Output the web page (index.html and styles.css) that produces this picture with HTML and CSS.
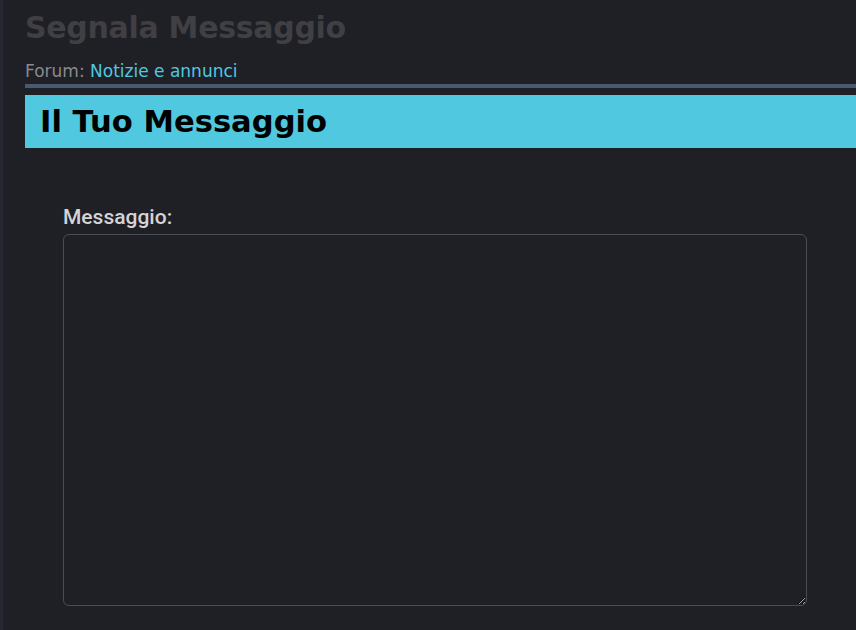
FILE: index.html
```html
<!DOCTYPE html>
<html lang="it">
<head>
  <meta charset="UTF-8" />
  <meta name="viewport" content="width=device-width, initial-scale=1.0"/>
  <title>Segnala Messaggio</title>
  <link rel="stylesheet" href="styles.css">
</head>
<body>
  <div class="page">
    <h1 class="page-title">Segnala Messaggio</h1>
    <div class="breadcrumb">Forum: <a href="#">Notizie e annunci</a></div>

    <div class="section-head">
      <h2>Il Tuo Messaggio</h2>
    </div>

    <form class="report-form">
      <label for="msg">Messaggio:</label>
      <textarea id="msg"></textarea>
    </form>
  </div>
</body>
</html>
```

FILE: styles.css
```css
* {
  margin: 0;
  padding: 0;
  box-sizing: border-box;
}

body {
  background-color: #1f2026;
  font-family: "DejaVu Sans", Verdana, sans-serif;
  overflow: hidden;
}

.page {
  border-left: 3px solid #262731;
  min-height: 100vh;
  padding: 8px 0 0 22px;
}

.page-title {
  font-size: 30px;
  font-weight: 700;
  color: #3f3f44;
  line-height: 40px;
  letter-spacing: -0.3px;
}

.breadcrumb {
  margin-top: 13px;
  font-size: 17px;
  color: #8a8a8e;
  line-height: 21px;
  padding-bottom: 2px;
  border-bottom: 4px solid #4a5a6e;
}

.breadcrumb a {
  color: #4fc8e0;
  text-decoration: none;
}

.section-head {
  margin-top: 7px;
  background: #50c8df;
  height: 53px;
  display: flex;
  align-items: center;
  padding-left: 15px;
}

.section-head h2 {
  font-size: 30.6px;
  font-weight: 700;
  color: #000;
}

.report-form {
  padding: 57px 50px 0 38px;
  display: flex;
  flex-direction: column;
}

.report-form label {
  font-family: Roboto, sans-serif;
  font-weight: 500;
  font-size: 21px;
  color: #d4d4d8;
  line-height: 24px;
  margin-bottom: 5px;
}

.report-form textarea {
  width: 744px;
  height: 372px;
  background: #1f2026;
  border: 1px solid #4b4b55;
  border-radius: 6px;
  color: #ddd;
  resize: both;
}
```
